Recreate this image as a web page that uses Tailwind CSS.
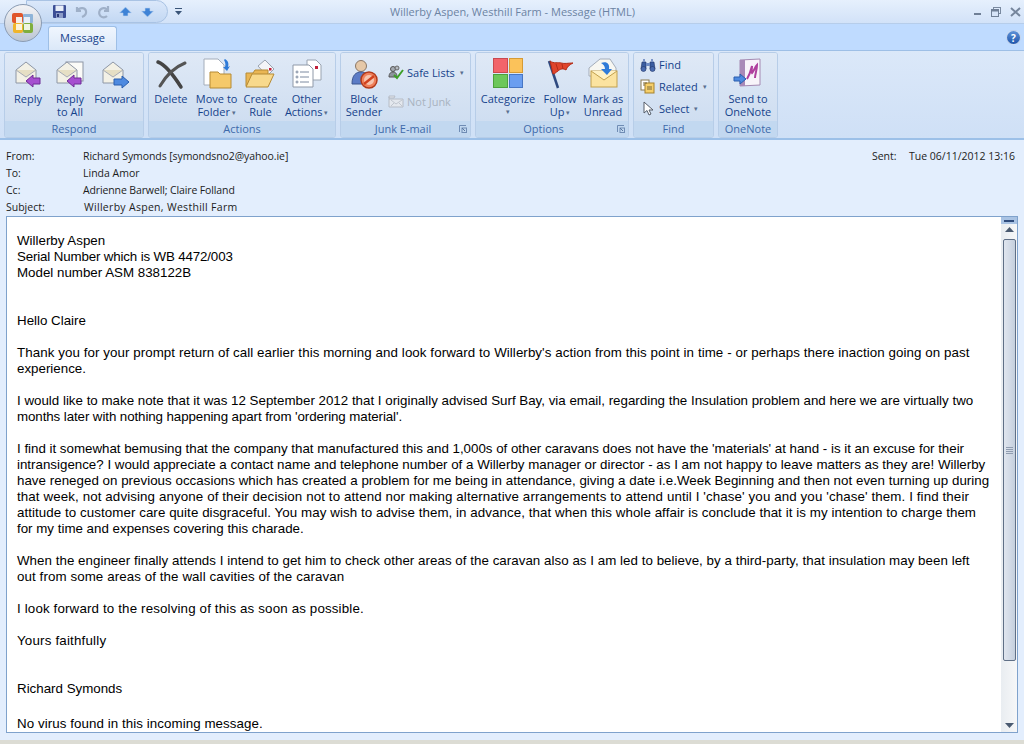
<!DOCTYPE html>
<html lang="en">
<head>
<meta charset="UTF-8">
<title>Willerby Aspen, Westhill Farm - Message (HTML)</title>
<script src="https://cdn.jsdelivr.net/npm/@tailwindcss/browser@4"></script>
</head>
<body class="w-[1024px] h-[744px] overflow-hidden bg-[#e3eefd] font-['Open_Sans','Noto_Sans',sans-serif] relative">

<!-- office button -->
<div class="absolute left-[4px] top-[4px] w-[38px] h-[38px] rounded-full bg-gradient-to-b from-[#f4f4f6] to-[#bcc6d4] border border-[#8b9cb3] flex items-center justify-center z-10">
  <svg width="26" height="26" viewBox="0 0 26 26">
    <rect x="2" y="3" width="11" height="10" rx="2" fill="#e0562a"/>
    <rect x="13" y="4" width="10" height="9" rx="1" fill="#8fb4d8"/>
    <rect x="3" y="13" width="10" height="10" rx="2" fill="#f0b52a"/>
    <rect x="13" y="13" width="10" height="10" rx="2" fill="#7fae3c"/>
    <rect x="6" y="7" width="6" height="6" fill="#f6efe6"/>
    <rect x="14" y="7" width="6" height="6" fill="#e8f0f8"/>
    <rect x="6" y="14" width="6" height="6" fill="#fbf3da"/>
    <rect x="14" y="14" width="6" height="6" fill="#eef5e2"/>
  </svg>
</div>

<!-- title bar -->
<div class="h-[24px] bg-gradient-to-b from-[#e6f0fd] to-[#d2e2f8] border-b border-[#b6cdea] flex items-center relative">
  <div class="ml-[26px] pl-[25px] pr-[10px] w-[142px] h-[23px] rounded-r-full bg-gradient-to-b from-[#dbe8fa] to-[#c3d8f3] border border-[#a9c3e4] flex items-center gap-[7px] shrink-0">
    <svg width="15" height="15" viewBox="0 0 15 15"><rect x="1" y="1" width="13" height="13" rx="1" fill="#3c4f96"/><rect x="3.5" y="1.5" width="8" height="5.5" fill="#e8eef8"/><rect x="4" y="9" width="7" height="5" fill="#8c9cc8"/><rect x="5" y="10" width="2" height="3" fill="#2b3a78"/></svg>
    <svg width="15" height="15" viewBox="0 0 15 15" fill="none"><path d="M3 3v4h4M3.500 7C5 3.500 11 3 12 7c.6 3-1.500 5-4 6" stroke="#9fb0c8" stroke-width="2.200"/></svg>
    <svg width="15" height="15" viewBox="0 0 15 15" fill="none"><path d="M12 2v5H8M12 7a4.600 4.600 0 1 0-1 5" stroke="#9fb0c8" stroke-width="2.200"/></svg>
    <svg width="15" height="12" viewBox="0 0 14 12"><path d="M7 1l6 6H9.500v3h-5V7H1z" fill="#3f83d6" stroke="#bcd4f0" stroke-width=".6"/></svg>
    <svg width="15" height="12" viewBox="0 0 14 12"><path d="M7 11L1 5h3.500V2h5v3H13z" fill="#3f83d6" stroke="#bcd4f0" stroke-width=".6"/></svg>
  </div>
  <svg class="ml-[7px]" width="7" height="9" viewBox="0 0 7 9"><rect x="0" y="1" width="7" height="1" fill="#3a5578"/><path d="M0 4h7L3.500 8z" fill="#3a5578"/></svg>
  <div class="absolute left-0 right-0 top-0 h-[24px] flex items-center justify-center text-[11px] text-[#6c83a3] pl-[1px]">Willerby Aspen, Westhill Farm - Message (HTML)</div>
  <div class="ml-auto mr-[3px] flex items-center gap-[9px] relative">
    <svg width="9" height="9" viewBox="0 0 9 9"><rect x="1" y="6" width="7" height="2" fill="#6f7f96"/></svg>
    <svg width="10" height="10" viewBox="0 0 10 10" fill="none"><rect x="2.500" y=".5" width="7" height="6" stroke="#7a8aa0"/><rect x=".5" y="2.500" width="7" height="7" fill="#d6e4f8" stroke="#6f7f96"/><rect x="1" y="3" width="6" height="1.500" fill="#6f7f96"/></svg>
    <svg width="11" height="10" viewBox="0 0 11 10" fill="none"><path d="M1 1l9 8M10 1l-9 8" stroke="#75859c" stroke-width="2"/></svg>
  </div>
</div>

<!-- tab row -->
<div class="h-[26px] bg-[#bfdbff] flex items-end pl-[48px] pr-[3px] relative">
  <div class="w-[69px] h-[24px] rounded-t-[3px] border border-b-0 border-[#9ebfe6] bg-gradient-to-b from-[#f0f6fe] to-[#dbe8f8] text-[11px] text-[#15428b] flex items-center justify-center">Message</div>
  <div class="ml-auto mb-[5px] w-[15px] h-[15px] rounded-full bg-gradient-to-b from-[#5f92d8] to-[#1f56ac] border border-white/70 flex items-center justify-center text-white text-[10px] font-bold leading-none">?</div>
</div>

<!-- ribbon -->
<div class="h-[90px] bg-gradient-to-b from-[#dbe8f9] to-[#cfe0f6] border-t border-[#9ebfe6] border-b-2 border-b-[#9cc0e8] flex gap-[4px] pl-[4px] pt-[1px] text-[11px] leading-[13px] text-[#15428b] whitespace-nowrap">

  <div class="w-[140px] h-[86px] rounded-[3px] border border-[#b7cde8] flex flex-col overflow-hidden">
    <div class="h-[68px] bg-gradient-to-b from-[#dfe9f6] to-[#cfdef1] flex pl-[2px] pt-[5px]">
      <div class="w-[42px] flex flex-col items-center">
        <svg class="shrink-0" width="32" height="32" viewBox="0 0 32 32"><path d="M4 12L14 4l10 8v13H4z" fill="#f3f1e6" stroke="#8d96a5"/><path d="M4 12l10 7 10-7" fill="#e6dfc4" stroke="#a7acb5"/><path d="M14 23l7-6v3h7v6h-7v3z" fill="#a64fd0" stroke="#6f2d96"/></svg>
        <div class="mt-[2px] text-center">Reply</div>
      </div>
      <div class="w-[42px] flex flex-col items-center">
        <svg class="shrink-0" width="32" height="32" viewBox="0 0 32 32"><rect x="12" y="4" width="17" height="19" fill="#fbfbf8" stroke="#8d96a5"/><path d="M3 12L13 4l10 8v13H3z" fill="#f3f1e6" stroke="#8d96a5"/><path d="M3 12l10 7 10-7" fill="#e6dfc4" stroke="#a7acb5"/><path d="M13 23l7-6v3h7v6h-7v3z" fill="#a64fd0" stroke="#6f2d96"/></svg>
        <div class="mt-[2px] text-center">Reply<br>to All</div>
      </div>
      <div class="w-[49px] flex flex-col items-center">
        <svg class="shrink-0" width="32" height="32" viewBox="0 0 32 32"><path d="M3 12L13 4l10 8v13H3z" fill="#f3f1e6" stroke="#8d96a5"/><path d="M3 12l10 7 10-7" fill="#e6dfc4" stroke="#a7acb5"/><path d="M29 24l-7-6v3h-8v6h8v3z" fill="#4e8ae0" stroke="#2a5fae"/></svg>
        <div class="mt-[2px] text-center">Forward</div>
      </div>
    </div>
    <div class="h-[16px] bg-[#c2d8f0] text-center text-[#3e6aaa] leading-[15px]">Respond</div>
  </div>

  <div class="w-[188px] h-[86px] rounded-[3px] border border-[#b7cde8] flex flex-col overflow-hidden">
    <div class="h-[68px] bg-gradient-to-b from-[#dfe9f6] to-[#cfdef1] flex pl-[3px] pt-[5px]">
      <div class="w-[38px] flex flex-col items-center">
        <svg class="shrink-0" width="32" height="32" viewBox="0 0 32 32" fill="none"><path d="M3 4c8 3 16 14 23 25" stroke="#444" stroke-width="3.500" stroke-linecap="round"/><path d="M30 5C20 9 12 16 5 28" stroke="#555" stroke-width="3" stroke-linecap="round"/></svg>
        <div class="mt-[2px] text-center">Delete</div>
      </div>
      <div class="w-[54px] flex flex-col items-center">
        <svg class="shrink-0" width="32" height="32" viewBox="0 0 32 32"><path d="M3 1h14l6 6v20H3z" fill="#fff" stroke="#a4adba"/><path d="M9 14h8l2 2h11v14H9z" fill="#f5c96a" stroke="#b58a34"/><path d="M24 1c3 2 4 4 3 8l2-1-3 5-4-4 2 0c1-3 0-5-1-7z" fill="#2f7bd8"/></svg>
        <div class="mt-[2px] text-center">Move to<br>Folder<span class="text-[#5a6f90] text-[7px] ml-[2px] align-[1px]">▾</span></div>
      </div>
      <div class="w-[34px] flex flex-col items-center">
        <svg class="shrink-0" width="32" height="32" viewBox="0 0 32 32"><path d="M14 8l7-6 9 9-7 7z" fill="#f4f5f8" stroke="#9aa3b0"/><rect x="25" y="10" width="2.500" height="2.500" fill="#c0203a"/><path d="M2 15h7l2-3h13v16H2z" fill="#eab654" stroke="#b58a34"/><path d="M2 29l6-13h22l-6 13z" fill="#f8d98c" stroke="#b58a34"/></svg>
        <div class="mt-[2px] text-center">Create<br>Rule</div>
      </div>
      <div class="w-[58px] flex flex-col items-center pl-[1px]">
        <svg class="shrink-0" width="32" height="32" viewBox="0 0 32 32" fill="none"><path d="M16 2h9l5 5v15H16z" fill="#fff" stroke="#99a3b0"/><rect x="24" y="8" width="3" height="3" fill="#c0203a"/><path d="M2 7h16l4 4v18H2z" fill="#fff" stroke="#8f99a8"/><g stroke="#7c8aa0"><circle cx="6" cy="14" r="1"/><circle cx="6" cy="19" r="1"/><circle cx="6" cy="24" r="1"/><path d="M9 14h9M9 19h9M9 24h9"/></g></svg>
        <div class="mt-[2px] text-center">Other<br>Actions<span class="text-[#5a6f90] text-[7px] ml-[2px] align-[1px]">▾</span></div>
      </div>
    </div>
    <div class="h-[16px] bg-[#c2d8f0] text-center text-[#3e6aaa] leading-[15px]">Actions</div>
  </div>

  <div class="w-[131px] h-[86px] rounded-[3px] border border-[#b7cde8] flex flex-col overflow-hidden">
    <div class="h-[68px] bg-gradient-to-b from-[#dfe9f6] to-[#cfdef1] flex pl-[3px] pt-[5px]">
      <div class="w-[40px] flex flex-col items-center">
        <svg class="shrink-0" width="32" height="32" viewBox="0 0 32 32"><circle cx="13" cy="8" r="5.500" fill="#e5c8a8" stroke="#8a7766"/><path d="M4 26c0-9 4-12 9-12s8 3 9 8v4z" fill="#5c7cc6" stroke="#3d568f"/><circle cx="21" cy="22" r="8" fill="#f0805a" stroke="#b13a1a" stroke-width="1.500"/><circle cx="21" cy="22" r="5" fill="#f6c4ae"/><path d="M16 26l10-8" stroke="#d0411e" stroke-width="2.500"/></svg>
        <div class="mt-[2px] text-center">Block<br>Sender</div>
      </div>
      <div class="pl-[4px] pt-[3px] flex flex-col text-[11px]">
        <div class="h-[22px] flex items-center gap-[3px]">
          <svg width="16" height="15" viewBox="0 0 16 15"><circle cx="5" cy="4" r="2.500" fill="#a5abb3" stroke="#555"/><path d="M1 12c0-4 2-5 4-5s4 1 4 5z" fill="#8e959e" stroke="#555"/><circle cx="9" cy="3" r="2" fill="#b8bdc4" stroke="#666"/><path d="M6 10l3 3 6-8" fill="none" stroke="#3fa028" stroke-width="2"/></svg>
          <span>Safe Lists</span><span class="text-[#5a6f90] text-[7px] ml-[2px]">▾</span>
        </div>
        <div class="h-[7px]"></div>
        <div class="h-[22px] flex items-center gap-[3px] text-[#a9b3c0]">
          <svg width="16" height="15" viewBox="0 0 16 15" fill="none"><path d="M1 4h5l1-2H1zM1 3v10h14V5H1" fill="#e4e8ee" stroke="#b6bcc6"/><path d="M3 6l5 4 6-4M3 12l3-3M14 12l-3-3" stroke="#c0c6cf"/></svg>
          <span>Not Junk</span>
        </div>
      </div>
    </div>
    <div class="h-[16px] bg-[#c2d8f0] text-[#3e6aaa] leading-[15px] flex relative justify-center pr-[5px]">Junk E-mail
      <svg class="absolute right-[3px] top-[4px]" width="8" height="8" viewBox="0 0 8 8" fill="none"><path d="M.5 7V.5H7" stroke="#6f8cb4"/><rect x="3" y="3" width="4.500" height="4.500" stroke="#6f8cb4"/><path d="M3 3l3 3" stroke="#5a77a0"/></svg>
    </div>
  </div>

  <div class="w-[154px] h-[86px] rounded-[3px] border border-[#b7cde8] flex flex-col overflow-hidden">
    <div class="h-[68px] bg-gradient-to-b from-[#dfe9f6] to-[#cfdef1] flex pl-[3px] pt-[5px]">
      <div class="w-[58px] flex flex-col items-center">
        <div class="w-[30px] h-[30px] shrink-0 mb-[2px] grid grid-cols-2 gap-[1px]">
          <div class="bg-[#f2646a] border border-[#c9494f]"></div><div class="bg-[#fbc25a] border border-[#d69b34]"></div>
          <div class="bg-[#6cc75a] border border-[#4ca03c]"></div><div class="bg-[#6a9ef0] border border-[#4776c4]"></div>
        </div>
        <div class="mt-[2px] text-center">Categorize<br><span class="text-[#5a6f90] text-[7px] leading-[13px] block">▾</span></div>
      </div>
      <div class="w-[46px] flex flex-col items-center">
        <svg class="shrink-0" width="32" height="32" viewBox="0 0 32 32"><path d="M5 3l9 27" stroke="#2f4a80" stroke-width="2.500"/><path d="M6 3c4 3 8 1 11 2 4 1 7 0 12 0-4 2-6 4-7 7-3-2-6-1-8 1-2 1-3 3-5 3z" fill="#e0452c" stroke="#b22d18"/><path d="M12 6l2 6M18 6l1 5" stroke="#b22d18"/></svg>
        <div class="mt-[2px] text-center">Follow<br>Up<span class="text-[#5a6f90] text-[7px] ml-[2px] align-[1px]">▾</span></div>
      </div>
      <div class="w-[40px] flex flex-col items-center">
        <svg class="shrink-0" width="32" height="32" viewBox="0 0 32 32"><path d="M2 10L13 1h10l6 9v8H2z" fill="#f7f7f2" stroke="#a4adba"/><rect x="4" y="13" width="26" height="16" fill="#fbe3a0" stroke="#c1a04e"/><path d="M4 13l13 9 13-9" fill="#fff1c4" stroke="#c1a04e"/><path d="M14 5c5-2 9 0 8 6h3l-5 6-6-6h4c0-3-2-5-4-6z" fill="#2f7bd8"/></svg>
        <div class="mt-[2px] text-center">Mark as<br>Unread</div>
      </div>
    </div>
    <div class="h-[16px] bg-[#c2d8f0] text-[#3e6aaa] leading-[15px] flex relative justify-center pr-[17px]">Options
      <svg class="absolute right-[3px] top-[4px]" width="8" height="8" viewBox="0 0 8 8" fill="none"><path d="M.5 7V.5H7" stroke="#6f8cb4"/><rect x="3" y="3" width="4.500" height="4.500" stroke="#6f8cb4"/><path d="M3 3l3 3" stroke="#5a77a0"/></svg>
    </div>
  </div>

  <div class="w-[81px] h-[86px] rounded-[3px] border border-[#b7cde8] flex flex-col overflow-hidden">
    <div class="h-[68px] bg-gradient-to-b from-[#dfe9f6] to-[#cfdef1] flex flex-col pl-[6px]">
      <div class="h-[22px] shrink-0 flex items-center gap-[3px]">
        <svg width="16" height="15" viewBox="0 0 16 15"><path d="M2 5h4v7H1zM10 5h4l1 7h-5z" fill="#3b5da0" stroke="#23386a" stroke-width=".6"/><rect x="6" y="6" width="4" height="3" fill="#6f8cc4"/><circle cx="3.500" cy="12" r="2.500" fill="#4a6cb0" stroke="#23386a" stroke-width=".6"/><circle cx="12.500" cy="12" r="2.500" fill="#4a6cb0" stroke="#23386a" stroke-width=".6"/><rect x="3" y="2" width="2" height="3" fill="#7e96c8"/><rect x="11" y="2" width="2" height="3" fill="#7e96c8"/></svg>
        <span>Find</span>
      </div>
      <div class="h-[22px] shrink-0 flex items-center gap-[3px]">
        <svg width="16" height="15" viewBox="0 0 16 15" fill="none"><rect x="1" y="1" width="8" height="10" fill="#fff" stroke="#8a7a50"/><rect x="5" y="4" width="9" height="10" fill="#f6cf6a" stroke="#a5812e"/><path d="M3 4h4M3 6h2M7 8h5M7 10h5" stroke="#7a6a3c"/></svg>
        <span>Related</span><span class="text-[#5a6f90] text-[7px] ml-[2px]">▾</span>
      </div>
      <div class="h-[22px] shrink-0 flex items-center gap-[3px]">
        <svg width="16" height="15" viewBox="0 0 16 15"><path d="M4 1v11l3-2.500 2 4.500 2-1-2-4h4z" fill="#fff" stroke="#555c68"/></svg>
        <span>Select</span><span class="text-[#5a6f90] text-[7px] ml-[2px]">▾</span>
      </div>
    </div>
    <div class="h-[16px] bg-[#c2d8f0] text-center text-[#3e6aaa] leading-[15px]">Find</div>
  </div>

  <div class="w-[60px] h-[86px] rounded-[3px] border border-[#b7cde8] flex flex-col overflow-hidden">
    <div class="h-[68px] bg-gradient-to-b from-[#dfe9f6] to-[#cfdef1] flex flex-col items-center pt-[5px]">
      <svg class="shrink-0" width="32" height="32" viewBox="0 0 32 32" fill="none"><path d="M8 2l20-1v26l-20 1z" fill="#f8f4fa" stroke="#a58ab2"/><path d="M8 2h5v26H8z" fill="#a98ab8"/><path d="M15 21c3-5 4-9 5-13 0 4-1 6 0 7 2-2 3-6 5-8 0 5-2 9-2 13" stroke="#b0409e" stroke-width="2"/><path d="M2 19h6v-3l6 5-6 5v-3H2z" fill="#4e8ae0" stroke="#2a5fae"/></svg>
      <div class="mt-[2px] text-center">Send to<br>OneNote</div>
    </div>
    <div class="h-[16px] bg-[#c2d8f0] text-center text-[#3e6aaa] leading-[15px]">OneNote</div>
  </div>
</div>

<!-- message header -->
<div class="h-[76px] pt-[8px] text-[10.500px] leading-[17px] text-[#1c1c1c] relative">
  <div class="flex pl-[6px]"><div class="w-[77px]">From:</div><div class="tracking-[-0.08px]">Richard Symonds [symondsno2@yahoo.ie]</div>
    <div class="ml-auto mr-[9px] flex"><div class="w-[37px]">Sent:</div><div>Tue 06/11/2012 13:16</div></div></div>
  <div class="flex pl-[6px]"><div class="w-[77px]">To:</div><div>Linda Amor</div></div>
  <div class="flex pl-[6px]"><div class="w-[77px]">Cc:</div><div class="tracking-[-0.12px]">Adrienne Barwell; Claire Folland</div></div>
  <div class="flex pl-[6px]"><div class="w-[78px]">Subject:</div><div class="tracking-[0.3px]">Willerby Aspen, Westhill Farm</div></div>
</div>

<!-- message body -->
<div class="mx-[6px] w-[1012px] h-[517px] bg-white border border-[#7fa2cc] flex overflow-hidden">
  <div class="flex-1 pl-[10px] pt-[16px] font-['Liberation_Sans',Arial,sans-serif] text-[13.33px] leading-[16px] text-black whitespace-nowrap overflow-hidden">
    <p>Willerby Aspen<br><span class="tracking-[-0.15px]">Serial Number which is WB 4472/003</span><br>Model number ASM 838122B</p>
    <p class="mt-[32px]">Hello Claire</p>
    <p class="mt-[16px]"><span class="tracking-[0.073px]">Thank you for your prompt return of call earlier this morning and look forward to Willerby's action from this point in time - or perhaps there inaction going on past</span><br>experience.</p>
    <p class="mt-[16px]">I would like to make note that it was 12 September 2012 that I originally advised Surf Bay, via email, regarding the Insulation problem and here we are virtually two<br><span class="tracking-[-0.09px]">months later with nothing happening apart from 'ordering material'.</span></p>
    <p class="mt-[16px]"><span class="tracking-[-0.012px]">I find it somewhat bemusing that the company that manufactured this and 1,000s of other caravans does not have the 'materials' at hand - is it an excuse for their</span><br>intransigence? I would appreciate a contact name and telephone number of a Willerby manager or director - as I am not happy to leave matters as they are! Willerby<br><span class="tracking-[0.025px]">have reneged on previous occasions which has created a problem for me being in attendance, giving a date i.e.Week Beginning and then not even turning up during</span><br><span class="tracking-[0.11px]">that week, not advising anyone of their decision not to attend nor making alternative arrangements to attend until I 'chase' you and you 'chase' them. I find their</span><br><span class="tracking-[0.067px]">attitude to customer care quite disgraceful. You may wish to advise them, in advance, that when this whole affair is conclude that it is my intention to charge them</span><br>for my time and expenses covering this charade.</p>
    <p class="mt-[16px]"><span class="tracking-[0.036px]">When the engineer finally attends I intend to get him to check other areas of the caravan also as I am led to believe, by a third-party, that insulation may been left</span><br><span class="tracking-[0.09px]">out from some areas of the wall cavities of the caravan</span></p>
    <p class="mt-[16px] tracking-[0.15px]">I look forward to the resolving of this as soon as possible.</p>
    <p class="mt-[16px] tracking-[0.19px]">Yours faithfully</p>
    <p class="mt-[32px]">Richard Symonds</p>
    <p class="mt-[19px] tracking-[0.07px]">No virus found in this incoming message.</p>
  </div>
  <!-- scrollbar -->
  <div class="w-[16px] bg-gradient-to-r from-[#e9edf1] to-[#f6f7f8] flex flex-col items-center shrink-0">
    <div class="w-full h-[7px] bg-[#a9c3e4] flex items-center justify-center"><div class="w-[10px] h-[2px] bg-[#2e4b7c]"></div></div>
    <svg class="mt-[3px]" width="9" height="5" viewBox="0 0 9 5"><path d="M4.500 0L9 5H0z" fill="#4a5a70"/></svg>
    <div class="mt-[7px] w-[13px] h-[422px] rounded-[2px] border border-[#5f6f86] bg-gradient-to-r from-[#dfe5ee] via-[#d3dbe7] to-[#c4cfdd] flex flex-col items-center justify-center gap-[1px]">
      <div class="w-[7px] h-[1px] bg-[#8f9cb0]"></div><div class="w-[7px] h-[1px] bg-[#8f9cb0]"></div><div class="w-[7px] h-[1px] bg-[#8f9cb0]"></div><div class="w-[7px] h-[1px] bg-[#8f9cb0]"></div>
    </div>
    <svg class="mt-auto mb-[4px]" width="9" height="5" viewBox="0 0 9 5"><path d="M4.500 5L9 0H0z" fill="#4a5a70"/></svg>
  </div>
</div>

<!-- bottom edge -->
<div class="absolute left-0 right-0 bottom-0 h-[4px] bg-[#dcdcd4]"></div>
</body>
</html>
